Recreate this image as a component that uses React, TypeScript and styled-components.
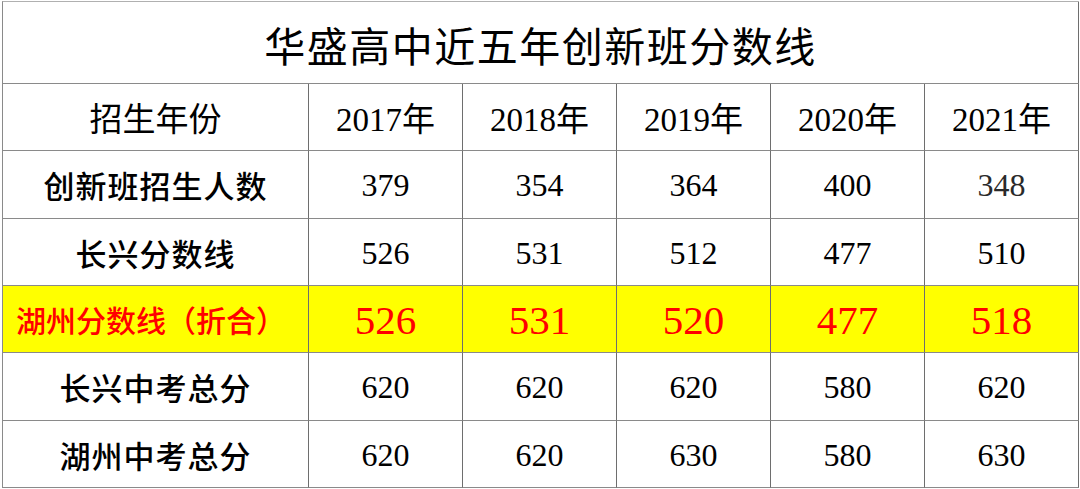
import { Fragment } from "react";
import styled, { createGlobalStyle } from "styled-components";

const GlobalStyle = createGlobalStyle`
  body {
    margin: 0;
    background: #ffffff;
    font-family: "Liberation Serif", "Noto Sans CJK SC", serif;
  }
`;

const YEARS = ["2017年", "2018年", "2019年", "2020年", "2021年"];

const ROWS: { label: string; values: string[]; highlight?: boolean }[] = [
  { label: "创新班招生人数", values: ["379", "354", "364", "400", "348"] },
  { label: "长兴分数线", values: ["526", "531", "512", "477", "510"] },
  {
    label: "湖州分数线（折合）",
    values: ["526", "531", "520", "477", "518"],
    highlight: true,
  },
  { label: "长兴中考总分", values: ["620", "620", "620", "580", "620"] },
  { label: "湖州中考总分", values: ["620", "620", "630", "580", "630"] },
];

const Table = styled.div`
  margin: 1px 0 0 2px;
  width: 1077px;
  display: grid;
  grid-template-columns: 306px repeat(5, 154px);
  grid-template-rows: 82px 67px 68px 67px 67px 68px 67px;
  border-left: 1px solid #8a8a8a;
  border-top: 1px solid #b0b0b0;
  box-sizing: border-box;
`;

const Cell = styled.div<{ $highlight?: boolean }>`
  display: flex;
  align-items: center;
  justify-content: center;
  border-right: 1px solid #6e6e6e;
  border-bottom: 1px solid #8a8a8a;
  background: ${(p) => (p.$highlight ? "#ffff00" : "#ffffff")};
  color: #000000;
  white-space: nowrap;
`;

const Title = styled(Cell)`
  grid-column: 1 / -1;
  font-size: 41px;
  font-weight: 400;
  letter-spacing: 1.5px;
  padding-top: 2px;
`;

const HeadCell = styled(Cell)`
  font-size: 33px;
`;

const Label = styled(Cell)<{ $highlight?: boolean }>`
  font-size: ${(p) => (p.$highlight ? "30px" : "31px")};
  font-weight: 500;
  letter-spacing: ${(p) => (p.$highlight ? "0" : "1px")};
  color: ${(p) => (p.$highlight ? "#ff0000" : "#000000")};
  justify-content: ${(p) => (p.$highlight ? "flex-start" : "center")};
  padding-left: ${(p) => (p.$highlight ? "13px" : "0")};
`;

const Value = styled(Cell)<{ $highlight?: boolean; $light?: boolean }>`
  font-size: ${(p) => (p.$highlight ? "41px" : "32px")};
  color: ${(p) => (p.$highlight ? "#ff0000" : p.$light ? "#2a2a2a" : "#000000")};
  font-weight: ${(p) => (p.$light ? 400 : 500)};
  padding-top: 2px;
`;

export default function App() {
  return (
    <>
      <GlobalStyle />
      <Table>
        <Title>华盛高中近五年创新班分数线</Title>
        <HeadCell>招生年份</HeadCell>
        {YEARS.map((y) => (
          <HeadCell key={y}>{y}</HeadCell>
        ))}
        {ROWS.map((row) => (
          <Fragment key={row.label}>
            <Label $highlight={row.highlight}>{row.label}</Label>
            {row.values.map((v, i) => (
              <Value
                key={i}
                $highlight={row.highlight}
                $light={row.label === "创新班招生人数" && i === 4}
              >
                {v}
              </Value>
            ))}
          </Fragment>
        ))}
      </Table>
    </>
  );
}
